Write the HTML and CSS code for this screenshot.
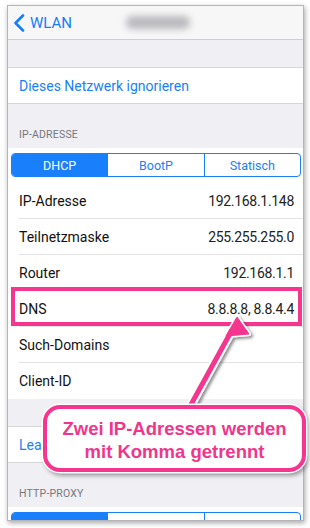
FILE: index.html
```html
<!DOCTYPE html>
<html lang="de">
<head>
<meta charset="utf-8">
<link rel="stylesheet" href="styles.css">
</head>
<body>
<div class="frame">
  <div class="nav">
    <div class="back">
      <svg class="chev" width="12" height="18" viewBox="0 0 12 18"><polyline points="10,1.5 2.5,9 10,16.5" fill="none" stroke="#147efb" stroke-width="2.6" stroke-linecap="round" stroke-linejoin="round"/></svg>
      <span>WLAN</span>
    </div>
    <div class="title-blur"></div>
  </div>
  <div class="gap"></div>
  <div class="group">
    <div class="row link">Dieses Netzwerk ignorieren</div>
  </div>
  <div class="header">IP-ADRESSE</div>
  <div class="group">
    <div class="segwrap">
      <div class="seg">
        <div class="segitem on">DHCP</div>
        <div class="segitem">BootP</div>
        <div class="segitem">Statisch</div>
      </div>
    </div>
    <div class="row sep"><span>IP-Adresse</span><span class="val">192.168.1.148</span></div>
    <div class="row sep"><span>Teilnetzmaske</span><span class="val">255.255.255.0</span></div>
    <div class="row sep"><span>Router</span><span class="val">192.168.1.1</span></div>
    <div class="row sep"><span>DNS</span><span class="val">8.8.8.8, 8.8.4.4</span></div>
    <div class="row sep"><span>Such-Domains</span><span class="val"></span></div>
    <div class="row"><span>Client-ID</span><span class="val"></span></div>
  </div>
  <div class="gap"></div>
  <div class="group">
    <div class="row link">Leas</div>
  </div>
  <div class="header">HTTP-PROXY</div>
  <div class="group">
    <div class="segwrap">
      <div class="seg">
        <div class="segitem on"></div>
        <div class="segitem"></div>
        <div class="segitem"></div>
      </div>
    </div>
  </div>
</div>

<div class="dnsbox"></div>
<svg class="arrow" width="310" height="528" viewBox="0 0 310 528">
  <defs>
    <filter id="sh" x="-20%" y="-20%" width="140%" height="140%">
      <feDropShadow dx="2" dy="2" stdDeviation="1.5" flood-color="#000" flood-opacity="0.45"/>
    </filter>
  </defs>
  <g filter="url(#sh)">
    <line x1="188" y1="410" x2="232" y2="330" stroke="#fff" stroke-width="9" stroke-linecap="round"/>
    <polygon points="237,317 249,334 226,336" fill="#fff" stroke="#fff" stroke-width="4" stroke-linejoin="round"/>
    <line x1="188" y1="410" x2="232" y2="330" stroke="#f5358e" stroke-width="5"/>
    <polygon points="237,317 249,334 226,336" fill="#f5358e" stroke="#f5358e" stroke-width="1" stroke-linejoin="round"/>
  </g>
</svg>
<div class="callout">
  <div class="callout-text">Zwei IP-Adressen werden<br>mit Komma getrennt</div>
</div>
</body>
</html>
```

FILE: styles.css
```css
html, body {
  margin: 0;
  padding: 0;
  background: #ffffff;
  width: 310px;
  height: 528px;
  overflow: hidden;
  position: relative;
}

.frame {
  position: relative;
  margin: 5px 0 0 7px;
  width: 295px;
  height: 514px;
  overflow: hidden;
  background: #efeff4;
  border: 1px solid #b5b5b8;
  box-shadow: 1px 2px 5px rgba(0,0,0,0.35);
  font-family: "Roboto", "Liberation Sans", sans-serif;
  color: #111;
}

.nav {
  height: 33px;
  background: #f7f7f8;
  border-bottom: 1px solid #cfcfd3;
  display: flex;
  align-items: center;
  position: relative;
}

.back {
  display: flex;
  align-items: center;
  gap: 5px;
  padding-left: 5px;
  color: #147efb;
  font-size: 15px;
}

.chev { display: block; }

.title-blur {
  position: absolute;
  left: 118px;
  top: 10px;
  width: 64px;
  height: 13px;
  background: #b9b9bd;
  border-radius: 6px;
  filter: blur(3.5px);
}

.gap {
  height: 27px;
  border-bottom: 1px solid #d6d6da;
}

.group {
  background: #fff;
}

.row {
  height: 36px;
  margin-left: 11px;
  padding-right: 9px;
  display: flex;
  align-items: center;
  justify-content: space-between;
  font-size: 14px;
  box-sizing: border-box;
}

.row.sep {
  border-bottom: 1px solid #e3e3e6;
}

.row.link {
  height: 35px;
  color: #1a7ffb;
}

.val {
  color: #222;
  letter-spacing: -0.3px;
}

.header {
  height: 45px;
  box-sizing: border-box;
  border-top: 1px solid #d6d6da;
  display: flex;
  align-items: flex-end;
  padding: 0 0 7px 11px;
  font-size: 10.5px;
  color: #77777c;
  letter-spacing: 0.2px;
}

.segwrap {
  height: 35px;
  padding: 5px 2px 0 3px;
  box-sizing: border-box;
}

.seg {
  display: flex;
  height: 24px;
  border: 1px solid #1a7ffb;
  border-radius: 4px;
  overflow: hidden;
  box-sizing: border-box;
}

.segitem {
  flex: 1;
  display: flex;
  align-items: center;
  justify-content: center;
  font-size: 12.5px;
  color: #1a7ffb;
  border-left: 1px solid #1a7ffb;
}

.segitem:first-child { border-left: none; }

.segitem.on {
  background: #1a7ffb;
  color: #fff;
}

.dnsbox {
  position: absolute;
  left: 11px;
  top: 287px;
  width: 291px;
  height: 39px;
  box-sizing: border-box;
  border: 4px solid #f5358e;
}

.arrow {
  position: absolute;
  left: 0;
  top: 0;
}

.callout {
  position: absolute;
  left: 43px;
  top: 405px;
  width: 263px;
  height: 67px;
  box-sizing: border-box;
  border: 4px solid #f5358e;
  border-radius: 17px;
  background: #fff;
  box-shadow: 0 0 0 1.5px #fff, 2px 3px 5px rgba(0,0,0,0.45);
  display: flex;
  align-items: center;
  justify-content: center;
  padding-top: 2px;
}

.callout-text {
  font-family: "Liberation Sans", Arial, sans-serif;
  font-weight: bold;
  font-size: 18.5px;
  line-height: 23px;
  color: #f0368c;
  text-align: center;
}
```
